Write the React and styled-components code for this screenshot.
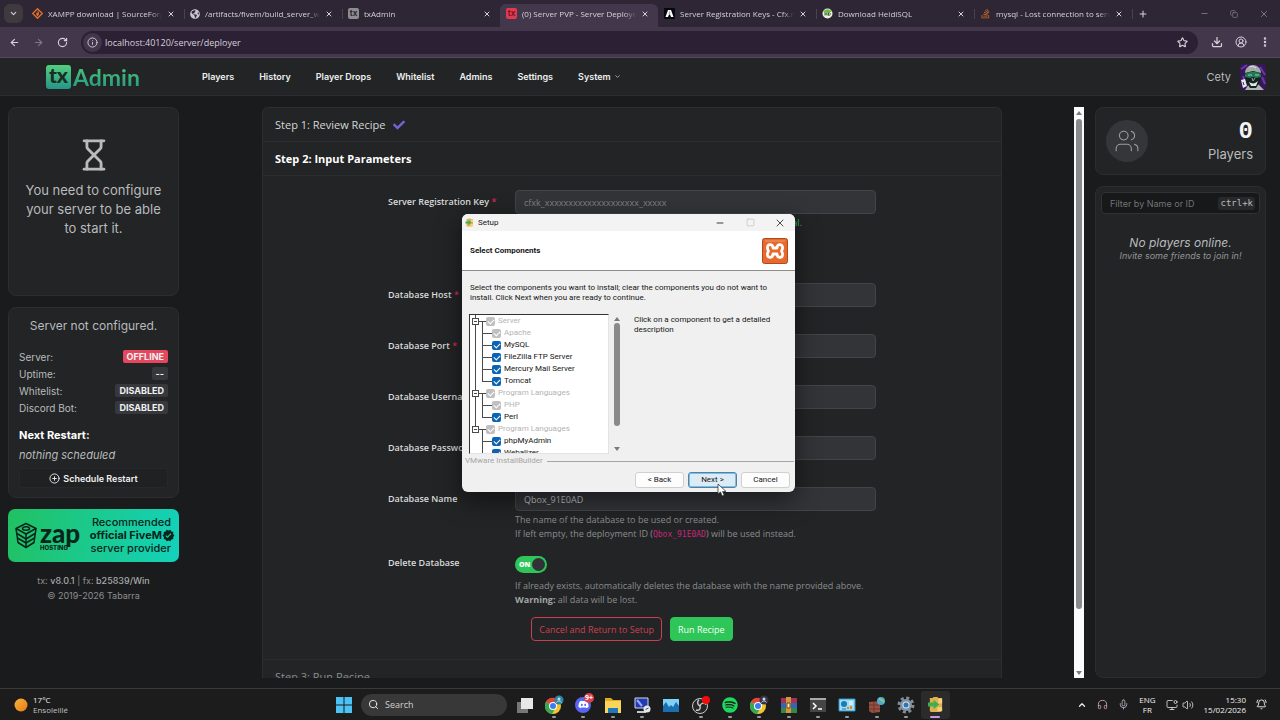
import React from 'react'
import styled, { createGlobalStyle, css } from 'styled-components'
import {
  ArrowLeft, ArrowRight, BellRing, ChevronDown, ChevronUp, CirclePlus, CircleUserRound,
  Copy, Download, EllipsisVertical, Headphones, Hourglass, Info, Mic, Minus, MonitorDot,
  Plus, RotateCw, Search, Square, Star, Users, Volume2, X,
} from 'lucide-react'
import { FaCheck, FaDiscord, FaGlobeAmericas, FaSpotify, FaStackOverflow } from 'react-icons/fa'
import { MdVerified } from 'react-icons/md'

const tabs = [
  { title: 'XAMPP download | SourceForge', icon: 'xampp' },
  { title: '/artifacts/fivem/build_server_windows', icon: 'globe' },
  { title: 'txAdmin', icon: 'tx' },
  { title: '(0) Server PVP - Server Deployer', icon: 'txred', active: true },
  { title: 'Server Registration Keys - Cfx.re', icon: 'cfx' },
  { title: 'Download HeidiSQL', icon: 'heidi' },
  { title: 'mysql - Lost connection to server', icon: 'stack' },
]

const navLinks = ['Players', 'History', 'Player Drops', 'Whitelist', 'Admins', 'Settings']

const serverStats = [
  { label: 'Server:', value: 'OFFLINE', danger: true },
  { label: 'Uptime:', value: '--' },
  { label: 'Whitelist:', value: 'DISABLED' },
  { label: 'Discord Bot:', value: 'DISABLED' },
]

const treeRows = [
  { label: 'Server', group: true, root: 'start', disabled: true },
  { label: 'Apache', root: 'full', disabled: true },
  { label: 'MySQL', root: 'full' },
  { label: 'FileZilla FTP Server', root: 'full' },
  { label: 'Mercury Mail Server', root: 'full' },
  { label: 'Tomcat', root: 'full', last: true },
  { label: 'Program Languages', group: true, root: 'full', disabled: true },
  { label: 'PHP', root: 'full', disabled: true },
  { label: 'Perl', root: 'full', last: true },
  { label: 'Program Languages', group: true, root: 'end', disabled: true },
  { label: 'phpMyAdmin' },
  { label: 'Webalizer', last: true },
]

function TabIcon({ name }) {
  switch (name) {
    case 'globe':
      return <FaGlobeAmericas size={10} color="#c9c4ce" />
    case 'stack':
      return <FaStackOverflow size={11} color="#b9652b" />
    case 'xampp':
      return (
        <svg width="11" height="11" viewBox="0 0 22 22">
          <path d="M11 1.5 20.5 11 11 20.5 1.5 11Z" fill="none" stroke="#e8702c" strokeWidth="2.6" />
          <path d="M11 5c4 3 4 8 0 12-4-4-3-7-1-8 0 2 1 2 1 0Z" fill="#e8702c" />
        </svg>
      )
    case 'cfx':
      return (
        <svg width="11" height="11" viewBox="0 0 22 22">
          <rect width="22" height="22" rx="2" fill="#07080d" />
          <path d="M8 4h6l5 14h-5l-2-5h-2l-2 5H3Z" fill="#fff" />
          <path d="M9.5 10h3M10.5 6.5h1" stroke="#07080d" strokeWidth="1.3" />
        </svg>
      )
    case 'heidi':
      return (
        <svg width="11" height="11" viewBox="0 0 22 22">
          <circle cx="11" cy="11" r="10" fill="#e9f3e4" />
          <path d="M2 8a10 10 0 0 1 18 0Z" fill="#6fbf3a" />
          <path d="M6 8v7M10 8v7M6 12h4M13 9v6c5 0 5-6 0-6Z" fill="none" stroke="#3c6b25" strokeWidth="2" />
        </svg>
      )
    default:
      return <TxFavicon $red={name === 'txred'}>tx</TxFavicon>
  }
}

function BrowserBar() {
  return (
    <Browser>
      <TabStrip>
        <TabSearch aria-label="Search tabs"><ChevronDown size={9} strokeWidth={3} /></TabSearch>
        {tabs.map((tab, i) => (
          <Tab key={tab.title} $active={tab.active} $noLine={tab.active || (tabs[i + 1] && tabs[i + 1].active)}>
            <TabIcon name={tab.icon} />
            <TabTitle>{tab.title}</TabTitle>
            <PlainButton aria-label="Close tab"><X size={8} strokeWidth={3} /></PlainButton>
          </Tab>
        ))}
        <NewTab aria-label="New tab"><Plus size={10} strokeWidth={2.5} /></NewTab>
        <WindowControls>
          <PlainButton aria-label="Minimize"><Minus size={9} /></PlainButton>
          <PlainButton aria-label="Restore"><Copy size={8} /></PlainButton>
          <PlainButton aria-label="Close"><X size={10} /></PlainButton>
        </WindowControls>
      </TabStrip>
      <Toolbar>
        <PlainButton aria-label="Back"><ArrowLeft size={11} strokeWidth={2.5} /></PlainButton>
        <PlainButton aria-label="Forward" $faded><ArrowRight size={11} strokeWidth={2.5} /></PlainButton>
        <PlainButton aria-label="Reload"><RotateCw size={11} strokeWidth={2.5} /></PlainButton>
        <Omnibox>
          <SiteInfo><Info size={11} /></SiteInfo>
          <UrlInput aria-label="Address" defaultValue="localhost:40120/server/deployer" />
          <PlainButton aria-label="Bookmark"><Star size={11} strokeWidth={2.5} /></PlainButton>
        </Omnibox>
        <ToolbarEnd>
          <PlainButton aria-label="Downloads"><Download size={12} strokeWidth={2.5} /></PlainButton>
          <PlainButton aria-label="Profile"><CircleUserRound size={12} /></PlainButton>
          <PlainButton aria-label="Menu"><EllipsisVertical size={12} strokeWidth={3} /></PlainButton>
        </ToolbarEnd>
      </Toolbar>
    </Browser>
  )
}

function Avatar() {
  return (
    <svg width="26" height="26" viewBox="0 0 26 26">
      <rect width="26" height="26" rx="3" fill="#35175a" />
      <path d="M1 5l6-4M20 3l5 8M3 12l2 6M22 13l3 7" stroke="#6b3aa0" strokeWidth="2" />
      <path d="M5 26 9 20h9l6 6Z" fill="#aeb6b3" />
      <path d="M5 10C5 4 9 1 13 1s8 3 8 9l-1 8-4 6h-6l-4-6Z" fill="#15201f" />
      <path d="M5 9c0-5 4-8 8-8s8 3 8 8l-8-2Z" fill="#a3aba9" />
      <path d="M9 3c2-1 5-1 7 1" stroke="#dfe5e3" fill="none" />
      <path d="M5 10c5-3 11-3 16 0v3l-5 1-3-1-3 1-5-1Z" fill="#257556" />
      <path d="M8 11h4M15 11h4" stroke="#6fe5b2" />
      <path d="M9 18c3 2 6 2 9-1l-2 5h-5Z" fill="#dfe6e3" />
      <path d="M12 14l1 3 2-3" stroke="#8aa39a" fill="none" />
      <path d="M1 16l4-1 2 7-4 2Z" fill="#e9e9ee" />
      <path d="M3 18l1 3" stroke="#333" />
    </svg>
  )
}

function TopNav() {
  return (
    <Header>
      <Logo href="#"><LogoMark>tx</LogoMark>Admin</Logo>
      <Nav>
        {navLinks.map((link) => <a key={link} href="#">{link}</a>)}
        <a href="#">System <ChevronDown size={7} /></a>
      </Nav>
      <UserName>Cety</UserName>
      <Avatar />
    </Header>
  )
}

function LeftColumn() {
  return (
    <Side>
      <ConfigureCard>
        <Hourglass size={34} strokeWidth={2} />
        <p>You need to configure your server to be able to start it.</p>
      </ConfigureCard>
      <StatusCard>
        <StatusTitle>Server not configured.</StatusTitle>
        {serverStats.map((stat) => (
          <StatRow key={stat.label}>
            <span>{stat.label}</span>
            <Badge $danger={stat.danger}>{stat.value}</Badge>
          </StatRow>
        ))}
        <RestartTitle>Next Restart:</RestartTitle>
        <RestartText>nothing scheduled</RestartText>
        <ScheduleButton><CirclePlus size={11} /> Schedule Restart</ScheduleButton>
      </StatusCard>
      <Banner href="#">
        <svg width="22" height="27" viewBox="0 0 44 54" fill="none" stroke="#06251b" strokeWidth="3" strokeLinejoin="round">
          <path d="M22 3 42 13 22 24 2 13Z" />
          <path d="M2 13l4 28 16 10 16-10 4-28M22 24v27" />
          <path d="M4 23l18 11 18-11M5 32l17 10 17-10" />
          <ellipse cx="22" cy="13" rx="7" ry="3.5" />
        </svg>
        <ZapName>zap<small>HOSTING</small></ZapName>
        <BannerText>
          <span>Recommended</span>
          <b>official FiveM <MdVerified size={13} /></b>
          <span>server provider</span>
        </BannerText>
      </Banner>
      <Versions>
        <p>tx: <b>v8.0.1</b> | fx: <b>b25839/Win</b></p>
        <p>© 2019-2026 Tabarra</p>
      </Versions>
    </Side>
  )
}

function Field({ id, label, required, space, children, ...input }) {
  return (
    <FieldRow $space={space}>
      <FieldLabel htmlFor={id}>{label} {required && <i>*</i>}</FieldLabel>
      <div>
        <TextInput id={id} {...input} />
        {children}
      </div>
    </FieldRow>
  )
}

function Deployer() {
  return (
    <Frame>
      <Panel>
        <StepHead>Step 1: Review Recipe <FaCheck size={12} color="#7462d6" /></StepHead>
        <StepHead $current>Step 2: Input Parameters</StepHead>
        <Form onSubmit={(e) => e.preventDefault()}>
          <Field id="key" label="Server Registration Key" required space={53} placeholder="cfxk_xxxxxxxxxxxxxxxxxxxx_xxxxx">
            <KeyHint><a href="#">Cfx.re Portal.</a></KeyHint>
          </Field>
          <Field id="host" label="Database Host" required space={27} />
          <Field id="port" label="Database Port" required space={27} />
          <Field id="user" label="Database Username" required space={27} />
          <Field id="password" label="Database Password" space={27} />
          <Field id="name" label="Database Name" space={10} defaultValue="Qbox_91E0AD">
            <Hint>
              The name of the database to be used or created.<br />
              If left empty, the deployment ID (<code>Qbox_91E0AD</code>) will be used instead.
            </Hint>
          </Field>
          <FieldRow $space={10}>
            <FieldLabel htmlFor="delete">Delete Database</FieldLabel>
            <div>
              <Toggle>
                <input id="delete" type="checkbox" defaultChecked />
                <span>ON</span>
              </Toggle>
              <Hint>
                If already exists, automatically deletes the database with the name provided above.<br />
                <b>Warning:</b> all data will be lost.
              </Hint>
            </div>
          </FieldRow>
          <Actions>
            <ActionButton type="button">Cancel and Return to Setup</ActionButton>
            <ActionButton $primary>Run Recipe</ActionButton>
          </Actions>
        </Form>
        <StepHead $muted>Step 3: Run Recipe</StepHead>
      </Panel>
      <Scrollbar>
        <Arrow $up />
        <Thumb />
        <Arrow />
      </Scrollbar>
    </Frame>
  )
}

function RightColumn() {
  return (
    <Side>
      <PlayersCard>
        <PlayersIcon><Users size={26} strokeWidth={1} /></PlayersIcon>
        <PlayersCount><b>0</b>Players</PlayersCount>
      </PlayersCard>
      <PlayerList>
        <Filter>
          <input aria-label="Filter players" placeholder="Filter by Name or ID" />
          <kbd>ctrl+k</kbd>
        </Filter>
        <NoPlayers>
          No players online.
          <small>Invite some friends to join in!</small>
        </NoPlayers>
      </PlayerList>
    </Side>
  )
}

function Connector({ group, root, last }) {
  const width = group ? 16 : 22
  const rootEnd = root === 'end' ? 6 : 12
  return (
    <svg width={width} height="12" fill="none" stroke="#4a4a4a" shapeRendering="crispEdges">
      {root && <path d={`M5.5 0V${rootEnd}`} />}
      {group ? (
        <>
          <path d="M9 6.5H16M12.5 6V12" />
          <rect x="2.5" y="3.5" width="6" height="6" fill="#fff" />
          <path d="M4 6.5H7" />
        </>
      ) : (
        <path d={`M12.5 0V${last ? 7 : 12}M12 6.5H22`} />
      )}
    </svg>
  )
}

function PackageIcon({ size }) {
  return (
    <svg width={size} height={size} viewBox="0 0 18 18">
      <path d="M3 2h3l1-1h4l1 1h4v14l-2 1H4l-1-1Z" fill="#e2b14b" />
      <path d="M12 3h4v5h-4ZM11 12h5v4h-5Z" fill="#f2d283" />
      <path d="M1 7h6V4l6 5-6 5v-3H1Z" fill="#3fae53" />
    </svg>
  )
}

function XamppLogo() {
  return (
    <svg width="26" height="26" viewBox="0 0 26 26">
      <rect x=".5" y=".5" width="25" height="25" rx="2" fill="#e8692b" stroke="#a94d20" />
      <path d="M3 3h20" stroke="#f29a68" />
      <path
        d="M11 10C11 6 6 5.5 5.500 9c-.2 2 .3 3 1 4-.7 1-1.200 2-1 4 .5 3.500 5.500 3 5.500-1h4c0 4 5 4.500 5.500 1 .2-2-.3-3-1-4 .7-1 1.200-2 1-4C20 5.500 15 6 15 10Z"
        fill="none"
        stroke="#fff"
        strokeWidth="2.8"
        strokeLinejoin="round"
      />
    </svg>
  )
}

function SetupDialog() {
  return (
    <Dialog role="dialog" aria-label="Setup">
      <DialogTitle>
        <PackageIcon size={9} />
        <span>Setup</span>
        <button aria-label="Minimize"><Minus size={10} /></button>
        <button aria-label="Maximize" disabled><Square size={9} /></button>
        <button aria-label="Close"><X size={12} strokeWidth={1.5} /></button>
      </DialogTitle>
      <DialogHead>
        <h2>Select Components</h2>
        <XamppLogo />
      </DialogHead>
      <DialogBody>
        <p>Select the components you want to install; clear the components you do not want to install. Click Next when you are ready to continue.</p>
        <Chooser>
          <Tree>
            {treeRows.map((row, i) => (
              <TreeRow key={i} $disabled={row.disabled}>
                <Connector {...row} />
                <input type="checkbox" id={`component-${i}`} defaultChecked disabled={row.disabled} />
                <label htmlFor={`component-${i}`}>{row.label}</label>
              </TreeRow>
            ))}
          </Tree>
          <TreeScroll>
            <Arrow $up />
            <Thumb $tree />
            <Arrow />
          </TreeScroll>
          <p>Click on a component to get a detailed description</p>
        </Chooser>
      </DialogBody>
      <Builder>VMware InstallBuilder</Builder>
      <DialogButtons>
        <DialogButton>&lt; Back</DialogButton>
        <DialogButton $focus>Next &gt;</DialogButton>
        <DialogButton>Cancel</DialogButton>
      </DialogButtons>
      <Pointer width="10" height="14" viewBox="0 0 10 14">
        <path d="M1 1v10l2.5-2 1.7 4 2-1-1.7-3.5H9Z" fill="#fff" stroke="#333" strokeWidth=".8" />
      </Pointer>
    </Dialog>
  )
}

function ChromeIcon({ badge }) {
  return (
    <svg width="20" height="20" viewBox="0 0 20 20">
      <circle cx="9" cy="11" r="8" fill="#f4c430" />
      <path d="M9 11 2 7a8 8 0 0 1 14 0Z" fill="#e0443a" />
      <path d="M9 11 2 7a8 8 0 0 0 6 12l4-7Z" fill="#35a852" />
      <circle cx="9" cy="11" r="4" fill="#fff" />
      <circle cx="9" cy="11" r="3" fill="#3b7ded" />
      <circle cx="15" cy="5" r="4.5" fill={badge} />
      <circle cx="15" cy="4" r="1.5" fill="#c7dbe2" />
      <path d="M12.5 7.5c1-2 4-2 5 0" stroke="#c7dbe2" fill="none" />
    </svg>
  )
}

function DiscordMark() {
  return <DiscordIcon><FaDiscord size={11} color="#fff" /><i>9+</i></DiscordIcon>
}

const apps = [
  {
    name: 'Task View', idle: true,
    icon: <svg width="18" height="18" viewBox="0 0 18 18"><path d="M1 6h11v11H1Z" fill="#777" /><path d="M5 2h12v11H5Z" fill="#e8e8e8" /></svg>,
  },
  { name: 'Chrome', icon: <ChromeIcon badge="#2c87a5" /> },
  { name: 'Discord', icon: <DiscordMark /> },
  {
    name: 'Explorer',
    icon: (
      <svg width="18" height="18" viewBox="0 0 18 18">
        <path d="M1 2h6l2 2h8v12H1Z" fill="#e5a823" />
        <path d="M1 5h16v12H1Z" fill="#fbd55b" />
        <path d="M4 12h10v5H4Z" fill="#2078b8" />
      </svg>
    ),
  },
  {
    name: 'Remote',
    icon: (
      <svg width="18" height="18" viewBox="0 0 18 18">
        <path d="M2 2h13v10H2Z" fill="#2239b4" stroke="#d5d9e4" />
        <path d="M4 4l5 6" stroke="#98adff" strokeWidth="2" />
        <path d="M4 15h9v2H4Z" fill="#c3c8d2" />
        <circle cx="14" cy="13" r="3.5" fill="#e5e8ee" />
        <path d="M12.5 13.5 15.5 12" stroke="#355" />
      </svg>
    ),
  },
  {
    name: 'Monitor', idle: true,
    icon: (
      <svg width="18" height="18" viewBox="0 0 18 18">
        <path d="M1 3h16v13H1Z" fill="#1b6fae" />
        <path d="M1 3h16v7l-3-4-3 5-2-2-2 2-3-5-3 4Z" fill="#7fd2f7" />
      </svg>
    ),
  },
  {
    name: 'OBS',
    icon: (
      <svg width="20" height="20" viewBox="0 0 20 20">
        <circle cx="9" cy="11" r="7.5" fill="#262528" stroke="#ccc" />
        <path d="M9 11C6 9.5 6 6 8 5M9 11c1-3 4-4 6-1.5M9 11c1 3-1 5-4 4" stroke="#ccc" strokeWidth="1.4" fill="none" />
        <circle cx="15" cy="5" r="4" fill="#f00c0c" />
      </svg>
    ),
  },
  { name: 'Spotify', icon: <FaSpotify size={16} color="#1ed760" /> },
  { name: 'Chrome profile', icon: <ChromeIcon badge="#3a3448" /> },
  {
    name: 'WinRAR',
    icon: (
      <svg width="18" height="18" viewBox="0 0 18 18">
        <path d="M1 2h16v5H1Z" fill="#a23355" />
        <path d="M1 7h16v5H1Z" fill="#3765b5" />
        <path d="M1 12h16v5H1Z" fill="#35864a" />
        <path d="M6 1h5v16H6Z" fill="#d49839" />
        <path d="M7 7h3v5H7Z" fill="#fff0ba" stroke="#6a4512" />
      </svg>
    ),
  },
  {
    name: 'Terminal',
    icon: (
      <svg width="18" height="18" viewBox="0 0 18 18">
        <path d="M1 2h16v14H1Z" fill="#454545" />
        <path d="M1 2h16v2H1Z" fill="#aaa" />
        <path d="M4 7l3 3-3 3M9 13h4" stroke="#fff" strokeWidth="1.5" fill="none" />
      </svg>
    ),
  },
  {
    name: 'Control Panel',
    icon: (
      <svg width="18" height="18" viewBox="0 0 18 18">
        <path d="M1 3h16v12H1Z" fill="#9bdcf7" stroke="#2c94c4" />
        <circle cx="6" cy="8" r="3" fill="#1c7ab4" />
        <path d="M11 6h4M11 8h4" stroke="#fff" />
        <path d="M10 13v-2M13 13v-3" stroke="#dd8a24" strokeWidth="2" />
        <path d="M4 13h4" stroke="#1c7ab4" />
      </svg>
    ),
  },
  {
    name: 'Firewall',
    icon: (
      <svg width="18" height="18" viewBox="0 0 18 18">
        <path d="M1 6l11-1v11l-8 1-3-2Z" fill="#96503f" />
        <path d="M1 9h11M1 13h11M6 6v10" stroke="#6d382e" />
        <circle cx="13" cy="5" r="4" fill="#4fa7d8" />
        <path d="M11 3c3 0 3 2 5 3" stroke="#8cd065" strokeWidth="2" fill="none" />
      </svg>
    ),
  },
  {
    name: 'Settings',
    icon: (
      <svg width="18" height="18" viewBox="0 0 18 18">
        <circle cx="9" cy="9" r="7" fill="none" stroke="#7f8c99" strokeWidth="3" strokeDasharray="3 2.5" />
        <circle cx="9" cy="9" r="6" fill="#87939f" />
        <circle cx="9" cy="9" r="3.5" fill="#d5e4f0" />
        <circle cx="9" cy="9" r="2.5" fill="#2877bd" />
      </svg>
    ),
  },
  { name: 'Setup', current: true, icon: <PackageIcon size={17} /> },
]

function Taskbar() {
  return (
    <Bar>
      <Weather>
        <svg width="14" height="14" viewBox="0 0 14 14">
          <defs>
            <linearGradient id="sun" x1="0" y1="0" x2="1" y2="1">
              <stop stopColor="#f6b63c" /><stop offset="1" stopColor="#e87817" />
            </linearGradient>
          </defs>
          <circle cx="7" cy="7" r="6.5" fill="url(#sun)" />
        </svg>
        <p>17°C<br /><span>Ensoleillé</span></p>
      </Weather>
      <Dock>
        <DockButton aria-label="Start">
          <svg width="16" height="16" viewBox="0 0 16 16" fill="#4cc2f5">
            <path d="M0 0h7.5v7.5H0ZM8.5 0H16v7.5H8.5ZM0 8.5h7.5V16H0ZM8.5 8.5H16V16H8.5Z" />
          </svg>
        </DockButton>
        <SearchBox>
          <Search size={11} />
          <input aria-label="Search" placeholder="Search" />
        </SearchBox>
        <Apps>
          {apps.map((app) => (
            <DockButton key={app.name} aria-label={app.name} $running={!app.idle} $current={app.current}>{app.icon}</DockButton>
          ))}
        </Apps>
      </Dock>
      <Tray>
        <ChevronUp size={10} strokeWidth={3} />
        <Headphones size={11} color="#c9a0a5" />
        <Mic size={11} color="#b7a9bc" />
        <p>ENG<br />FR</p>
        <TrayPair><MonitorDot size={12} strokeWidth={1.5} /><Volume2 size={12} strokeWidth={1.5} /></TrayPair>
        <Clock>15:30<br />15/02/2026</Clock>
        <BellRing size={11} />
      </Tray>
    </Bar>
  )
}

function App() {
  return (
    <Screen>
      <GlobalStyle />
      <BrowserBar />
      <TopNav />
      <Main>
        <LeftColumn />
        <Deployer />
        <RightColumn />
      </Main>
      <Taskbar />
      <SetupDialog />
    </Screen>
  )
}

export default App

const segoe = '"Open Sans", "Noto Sans", sans-serif'
const inter = 'Inter, "Liberation Sans", sans-serif'
const mono = '"DejaVu Sans Mono", monospace'

const GlobalStyle = createGlobalStyle`
  * { box-sizing: border-box; }
  body { margin: 0; background: #1a1b1c; overflow: hidden; }
  p, h2 { margin: 0; }
  a { color: inherit; text-decoration: none; }
  button, input { font: inherit; color: inherit; margin: 0; }
  svg { flex: none; display: block; }
`

const Screen = styled.div`
  height: 100vh;
  display: flex;
  flex-direction: column;
  font-family: ${inter};
  color: #b9bbbd;
`

/* browser */
const Browser = styled.div`
  font-family: ${segoe};
  background: #2e2634;
  color: #d6d0da;
`

const TabStrip = styled.div`
  display: flex;
  align-items: center;
  height: 27px;
  padding: 0 4px;
`

const PlainButton = styled.button`
  display: flex;
  padding: 0;
  border: 0;
  background: none;
  opacity: ${props => props.$faded ? 0.4 : 1};
`

const TabSearch = styled(PlainButton)`
  width: 19px;
  height: 19px;
  margin-right: 3px;
  align-items: center;
  justify-content: center;
  border-radius: 6px;
  background: #3e3a40;
`

const Tab = styled.div`
  flex: 0 1 158px;
  min-width: 0;
  height: 23px;
  margin-top: 4px;
  padding: 0 9px 4px 6px;
  display: flex;
  align-items: center;
  gap: 5px;
  font-size: 8px;
  border-radius: 6px 6px 0 0;
  background: ${props => props.$active ? '#43384b' : 'none'};

  &::after {
    content: '';
    width: 1px;
    height: 10px;
    margin: 0 -10px 0 4px;
    background: ${props => props.$noLine ? 'none' : '#4a4150'};
  }
`

const TabTitle = styled.span`
  flex: 1;
  overflow: hidden;
  white-space: nowrap;
  mask-image: linear-gradient(90deg, #000 90%, transparent);
`

const TxFavicon = styled.span`
  width: 11px;
  height: 11px;
  flex: none;
  border-radius: 2px;
  text-align: center;
  font: 700 8px/10px ${inter};
  color: ${props => props.$red ? '#7c1226' : '#2e2634'};
  background: ${props => props.$red ? '#e03a50' : '#8f8c92'};
`

const NewTab = styled(PlainButton)`
  margin-left: 6px;
`

const WindowControls = styled.div`
  display: flex;
  align-items: center;
  gap: 21px;
  margin-left: auto;
  padding-right: 7px;
  color: #8d8593;
`

const Toolbar = styled.div`
  display: flex;
  align-items: center;
  gap: 13px;
  height: 31px;
  padding: 0 9px;
  background: #43384b;
  border-bottom: 1px solid #554a5c;
`

const ToolbarEnd = styled.div`
  display: flex;
  gap: 12px;
`

const Omnibox = styled.div`
  flex: 1;
  display: flex;
  align-items: center;
  height: 23px;
  padding: 0 10px 0 2px;
  border-radius: 12px;
  background: #2b2034;
`

const SiteInfo = styled.span`
  padding: 4px;
  border-radius: 10px;
  background: #41364a;
`

const UrlInput = styled.input`
  flex: 1;
  padding: 0 3px;
  border: 0;
  background: none;
  font-size: 9px;
`

/* txAdmin header */
const Header = styled.header`
  display: flex;
  align-items: center;
  height: 38px;
  padding: 0 14px 0 46px;
  background: #222425;
  border-bottom: 1px solid #2b2d2e;
`

const Logo = styled.a`
  display: flex;
  align-items: center;
  gap: 2px;
  width: 94px;
  margin-right: 62px;
  font: 700 23px/26px Lato, sans-serif;
  color: transparent;
  background: linear-gradient(#4ccb78, #24967f);
  background-clip: text;
`

const LogoMark = styled.span`
  width: 25px;
  height: 24px;
  border-radius: 3px;
  text-align: center;
  font: 900 21px/20px Lato, sans-serif;
  color: #1c2b26;
  background: linear-gradient(#52cf7c, #24968a);
`

const Nav = styled.nav`
  flex: 1;
  display: flex;
  gap: 25px;
  font-size: 9px;
  font-weight: 600;
  color: #eeeff0;

  a {
    display: flex;
    align-items: center;
    gap: 3px;
    white-space: nowrap;
  }
`

const UserName = styled.span`
  margin-right: 9px;
  font-size: 11px;
`

/* columns */
const Main = styled.main`
  flex: 1;
  min-height: 0;
  display: grid;
  grid-template-columns: 171px 1fr 171px;
  gap: 11px;
  padding: 11px 14px 10px 8px;
  background: #1a1b1c;
`

const Side = styled.aside`
  display: flex;
  flex-direction: column;
  gap: 11px;
  min-height: 0;
`

const Card = styled.section`
  border: 1px solid #2b2d2f;
  border-radius: 8px;
  background: #222425;
`

const ConfigureCard = styled(Card)`
  height: 189px;
  padding: 30px 14px 0;
  display: flex;
  flex-direction: column;
  align-items: center;
  gap: 9px;
  text-align: center;
  font-size: 13px;
  line-height: 19px;
`

const StatusCard = styled(Card)`
  height: 191px;
  padding: 9px 10px;
  font-size: 10px;
`

const StatusTitle = styled.p`
  margin-bottom: 13px;
  text-align: center;
  font-size: 12px;
  line-height: 18px;
`

const StatRow = styled.div`
  display: flex;
  align-items: center;
  justify-content: space-between;
  height: 17px;
`

const Badge = styled.span`
  padding: 0 4px;
  border-radius: 2px;
  font-size: 9px;
  font-weight: 700;
  line-height: 13px;
  color: #f0f0f1;
  background: ${props => props.$danger ? '#e5485d' : '#36383c'};
`

const RestartTitle = styled.p`
  margin-top: 10px;
  font-size: 11px;
  font-weight: 700;
  line-height: 18px;
  color: #fff;
`

const RestartText = styled.p`
  font-size: 11px;
  font-style: italic;
  line-height: 22px;
`

const ScheduleButton = styled.button`
  display: flex;
  align-items: center;
  justify-content: center;
  gap: 3px;
  width: 100%;
  height: 20px;
  margin-top: 2px;
  border: 1px solid #262829;
  border-radius: 2px;
  background: #1f2122;
  font-size: 9px;
  font-weight: 600;
  color: #f0f0f1;
`

const Banner = styled.a`
  display: flex;
  align-items: center;
  height: 53px;
  padding: 0 4px 0 7px;
  border-radius: 7px;
  background: linear-gradient(100deg, #21c162, #13d2bb);
  color: #06251b;
`

const ZapName = styled.span`
  margin-left: 3px;
  font: 900 26px/24px Lato, sans-serif;

  small {
    display: block;
    font: 800 6px/6px ${inter};
  }
`

const BannerText = styled.span`
  flex: 1;
  display: flex;
  flex-direction: column;
  align-items: flex-end;
  font-size: 11px;
  font-weight: 500;
  line-height: 13px;
  white-space: nowrap;

  span { padding-right: 4px; }

  b {
    display: flex;
    align-items: center;
    font-weight: 700;
  }
`

const Versions = styled.div`
  text-align: center;
  font-size: 9px;
  line-height: 15px;
  color: #8d8f91;

  b {
    font-weight: 500;
    color: #a8aaac;
  }
`

/* deployer */
const Frame = styled.div`
  display: flex;
  min-height: 0;
  font-family: ${segoe};
`

const Panel = styled.div`
  flex: 1;
  max-width: 740px;
  margin: 0 auto;
  overflow: hidden;
  border: 1px solid #2b2d2f;
  border-bottom: 0;
  border-radius: 6px 6px 0 0;
  background: #222425;
`

const StepHead = styled.div`
  display: flex;
  align-items: center;
  gap: 8px;
  height: 34px;
  padding: 0 12px;
  border-bottom: 1px solid #2b2d2f;
  font-size: 11px;
  font-weight: ${props => props.$current ? 700 : 400};
  color: ${props => props.$current ? '#fff' : '#d5d7d9'};
  ${props => props.$muted && css`
    border-top: 1px solid #2b2d2f;
    color: #8b8d8f;
  `}
`

const Form = styled.form`
  max-width: 488px;
  margin: 0 auto;
  padding: 14px 0 18px;
`

const FieldRow = styled.div`
  display: grid;
  grid-template-columns: 127px 1fr;
  align-items: start;
  margin-bottom: ${props => props.$space}px;
`

const FieldLabel = styled.label`
  font-size: 9px;
  font-weight: 600;
  line-height: 24px;
  color: #d9dadb;
  white-space: nowrap;

  i {
    font-style: normal;
    color: #d6245c;
  }
`

const TextInput = styled.input`
  display: block;
  width: 100%;
  height: 24px;
  padding: 0 8px;
  border: 1px solid #424448;
  border-radius: 4px;
  background: #323438;
  font-size: 9px;
  color: #c3c5c7;

  &::placeholder {
    color: #7e8083;
  }
`

const Hint = styled.p`
  padding-top: 2px;
  font-size: 9px;
  line-height: 14px;
  color: #8b8d8f;
  white-space: nowrap;

  b { color: #a3a5a7; }

  code {
    font: 8px ${mono};
    color: #c8257b;
  }
`

const KeyHint = styled(Hint)`
  width: 287px;
  text-align: right;
  color: #2fb36c;
`

const Toggle = styled.div`
  display: flex;
  align-items: center;
  height: 26px;

  input {
    appearance: none;
    width: 32px;
    height: 17px;
    padding: 2px;
    border-radius: 9px;
    background: #2fc659;
  }

  input::before {
    content: '';
    display: block;
    width: 13px;
    height: 13px;
    margin-left: auto;
    border-radius: 50%;
    background: #303237;
  }

  span {
    margin-left: -28px;
    font-size: 7px;
    font-weight: 800;
    color: #fff;
  }
`

const Actions = styled.div`
  display: flex;
  justify-content: center;
  gap: 8px;
`

const ActionButton = styled.button`
  height: 24px;
  padding: 0 7px;
  border: 1px solid ${props => props.$primary ? '#2fc659' : '#c93e50'};
  border-radius: 4px;
  background: ${props => props.$primary ? '#2fc659' : 'none'};
  font-size: 9px;
  color: ${props => props.$primary ? '#f2fff5' : '#cf4053'};
`

const Scrollbar = styled.div`
  display: flex;
  flex-direction: column;
  align-items: center;
  justify-content: space-between;
  width: 10px;
  padding: 4px 0 3px;
  background: #fbfbfb;
`

const Arrow = styled.i`
  border: 3px solid transparent;
  border-width: ${props => props.$up ? '0 3px 4px' : '4px 3px 0'};
  border-bottom-color: ${props => props.$up ? '#7b7b7b' : 'transparent'};
  border-top-color: ${props => props.$up ? 'transparent' : '#7b7b7b'};
`

const Thumb = styled.i`
  flex: 0 1 ${props => props.$tree ? 103 : 490}px;
  width: 6px;
  margin: ${props => props.$tree ? '2px 0 auto' : '4px 0 auto'};
  border-radius: 3px;
  background: #8a8a8a;
`

/* players */
const PlayersCard = styled(Card)`
  display: flex;
  align-items: center;
  justify-content: space-between;
  height: 68px;
  padding: 0 12px 0 10px;
`

const PlayersIcon = styled.span`
  padding: 8px;
  border-radius: 50%;
  background: #35363a;
  color: #9b9da0;
`

const PlayersCount = styled.p`
  display: flex;
  flex-direction: column;
  align-items: flex-end;
  font-size: 13px;
  line-height: 18px;

  b {
    font: 700 24px/26px "Liberation Mono", monospace;
    color: #f4f4f5;
  }
`

const PlayerList = styled(Card)`
  flex: 1;
  padding: 5px;
`

const Filter = styled.div`
  display: flex;
  align-items: center;
  height: 22px;
  padding: 0 4px 0 8px;
  border: 1px solid #303234;
  border-radius: 4px;
  background: #17181a;

  input {
    flex: 1;
    min-width: 0;
    padding: 0;
    border: 0;
    background: none;
    font-size: 9px;
  }

  input::placeholder { color: #727476; }

  kbd {
    padding: 0 2px;
    border-radius: 3px;
    background: #27292b;
    font: 9px/13px ${mono};
  }
`

const NoPlayers = styled.p`
  padding-top: 22px;
  text-align: center;
  font-size: 12px;
  font-style: italic;
  line-height: 14px;

  small {
    display: block;
    font-size: 9px;
    line-height: 12px;
    color: #939597;
  }
`

/* installer window */
const Dialog = styled.section`
  position: absolute;
  top: 214px;
  left: 462px;
  width: 333px;
  height: 278px;
  display: flex;
  flex-direction: column;
  border-radius: 6px;
  background: #f0f0f0;
  box-shadow: 0 8px 24px rgba(0, 0, 0, 0.5);
  font: 8px/10px Roboto, ${segoe};
  color: #161616;
`

const DialogTitle = styled.div`
  display: flex;
  align-items: center;
  height: 17px;
  padding: 0 0 0 3px;
  border-radius: 6px 6px 0 0;
  background: #f3f3f3;

  span {
    flex: 1;
    padding-left: 4px;
  }

  button {
    display: flex;
    justify-content: center;
    width: 30px;
    padding: 0;
    border: 0;
    background: none;
  }

  button:disabled { color: #c4c4c4; }
`

const DialogHead = styled.div`
  display: flex;
  align-items: center;
  justify-content: space-between;
  height: 40px;
  padding: 0 7px 0 8px;
  border-bottom: 1px solid #8d8d8d;
  background: #fff;

  h2 {
    font-size: 8px;
    font-weight: 700;
  }
`

const DialogBody = styled.div`
  padding: 12px 20px 0 7px;

  > p {
    padding-left: 1px;
  }
`

const Chooser = styled.div`
  display: flex;
  height: 140px;
  margin-top: 11px;

  > p {
    padding-top: 1px;
  }
`

const Tree = styled.div`
  flex: none;
  width: 140px;
  overflow: hidden;
  border: 1px solid #e3e3e3;
  border-top-color: #333;
  border-left-color: #333;
  background: #fff;
`

const TreeRow = styled.div`
  display: flex;
  align-items: center;
  height: 12px;
  white-space: nowrap;
  color: ${props => props.$disabled ? '#b4b4b4' : 'inherit'};

  input {
    appearance: none;
    width: 9px;
    height: 9px;
    border-radius: 2px;
    background: ${props => props.$disabled ? '#c0c0c0' : '#0a64b4'};
  }

  input::before {
    content: '';
    display: block;
    width: 5px;
    height: 3px;
    margin: 2px;
    border: solid #fff;
    border-width: 0 0 1px 1px;
    transform: rotate(-45deg);
  }

  label { padding-left: 3px; }
`

const TreeScroll = styled.div`
  flex: none;
  display: flex;
  flex-direction: column;
  align-items: center;
  justify-content: space-between;
  width: 16px;
  margin-right: 9px;
  padding: 3px 0;
`

const Builder = styled.div`
  display: flex;
  align-items: center;
  gap: 4px;
  margin-top: 2px;
  padding: 0 1px 0 3px;
  color: #a5a5a5;

  &::after {
    content: '';
    flex: 1;
    height: 1px;
    background: #a5a5a5;
  }
`

const DialogButtons = styled.div`
  display: flex;
  justify-content: flex-end;
  gap: 4px;
  margin-top: 6px;
  padding-right: 5px;
`

const DialogButton = styled.button`
  width: 49px;
  height: 16px;
  padding: 0;
  border: 1px solid ${props => props.$focus ? '#3f87b5' : '#d0d0d0'};
  border-radius: 3px;
  background: ${props => props.$focus ? '#dcecf6' : '#fdfdfd'};
  box-shadow: ${props => props.$focus ? 'inset 0 0 0 1px #8fb9d3' : 'none'};
`

const Pointer = styled.svg`
  position: absolute;
  top: 269px;
  left: 255px;
`

/* taskbar */
const Bar = styled.footer`
  display: grid;
  grid-template-columns: 1fr auto 1fr;
  align-items: center;
  height: 32px;
  padding: 0 13px 0 14px;
  border-top: 1px solid #3a3a3a;
  background: #1c1c1c;
  font: 8px/10px ${segoe};
  color: #f0f0f0;
`

const Weather = styled.div`
  display: flex;
  align-items: center;
  gap: 5px;

  span { color: #c0c0c0; }
`

const Dock = styled.div`
  display: flex;
  align-items: center;
`

const Apps = styled.div`
  display: flex;
  width: 440px;
  margin-left: 3px;
`

const DockButton = styled.button`
  position: relative;
  flex: 1;
  display: flex;
  align-items: center;
  justify-content: center;
  min-width: 26px;
  height: 28px;
  padding: 0;
  border: 0;
  border-radius: 3px;
  background: ${props => props.$current ? '#2b2b2b' : 'none'};

  &::after {
    content: '';
    position: absolute;
    bottom: 1px;
    left: 50%;
    width: ${props => props.$current ? 10 : 4}px;
    height: 2px;
    border-radius: 1px;
    transform: translateX(-50%);
    background: ${props => props.$current ? '#c39bdc' : props.$running ? '#9b9b9b' : 'none'};
  }
`

const SearchBox = styled.div`
  display: flex;
  align-items: center;
  gap: 6px;
  width: 146px;
  height: 22px;
  margin-left: 4px;
  padding: 0 7px;
  border-radius: 11px;
  background: #383838;

  input {
    flex: 1;
    min-width: 0;
    padding: 0;
    border: 0;
    background: none;
    font-size: 9px;
  }

  input::placeholder { color: #d0d0d0; }
`

const DiscordIcon = styled.span`
  display: flex;
  align-items: center;
  justify-content: center;
  width: 16px;
  height: 16px;
  border-radius: 50%;
  background: #5865f2;

  i {
    position: absolute;
    top: 2px;
    right: 4px;
    width: 10px;
    border-radius: 5px;
    background: #d93f4c;
    font: 700 7px/10px ${segoe};
    color: #fff;
  }
`

const Tray = styled.div`
  display: flex;
  align-items: center;
  justify-content: flex-end;
  gap: 10px;
  text-align: center;
`

const TrayPair = styled.span`
  display: flex;
  gap: 4px;
`

const Clock = styled.p`
  text-align: right;
`
